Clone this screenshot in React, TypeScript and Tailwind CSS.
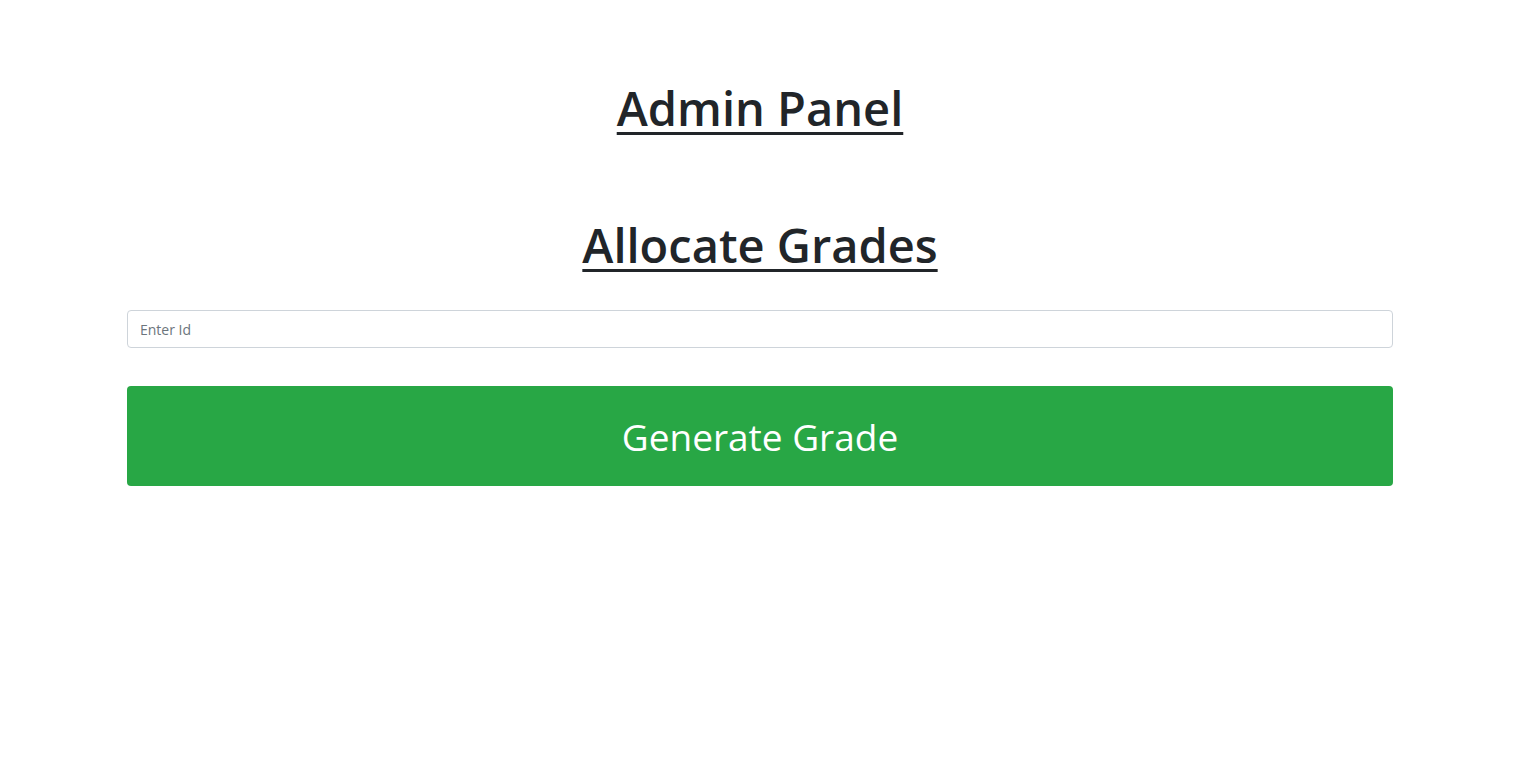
export default function App() {
  return (
    <div className="min-h-screen bg-white text-[#212529]" style={{ fontFamily: '"Open Sans", "Noto Sans", sans-serif' }}>
      <div className="mx-auto w-[1266px] pt-[78px]">
        <h1 className="text-center text-[47px] leading-[60px] font-semibold underline decoration-[3px] underline-offset-[6px]">
          Admin Panel
        </h1>
        <h2 className="mt-[77px] text-center text-[47px] leading-[60px] font-semibold underline decoration-[3px] underline-offset-[6px]">
          Allocate Grades
        </h2>
        <input
          type="text"
          placeholder="Enter Id"
          className="mt-[35px] block h-[38px] w-full rounded-[4px] border border-[#ced4da] px-3 text-[14px] text-[#495057] placeholder:text-[#6c757d] outline-none"
        />
        <button className="mt-[38px] block h-[100px] w-full rounded-[4px] bg-[#28a745] pt-[2px] text-[37px] text-white">
          Generate Grade
        </button>
      </div>
    </div>
  );
}
